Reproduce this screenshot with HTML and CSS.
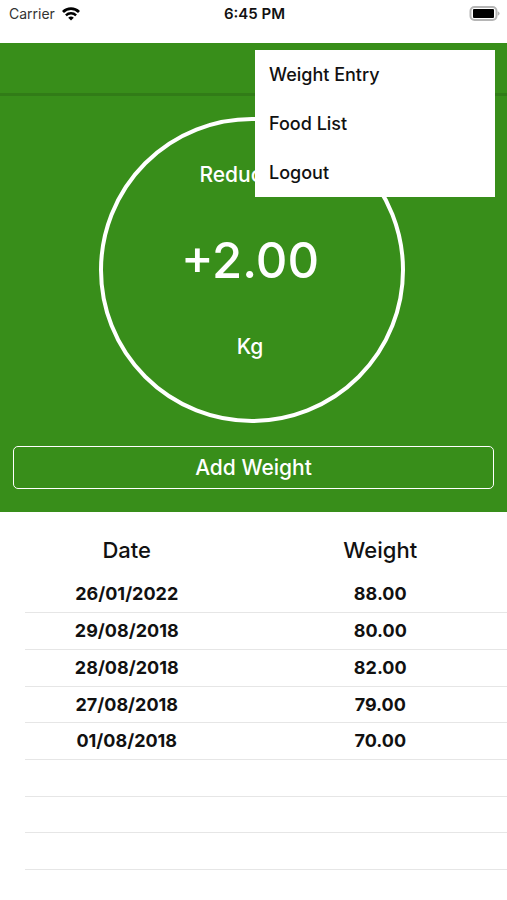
FILE: index.html
```html
<!DOCTYPE html>
<html lang="en">
<head>
    <meta charset="UTF-8">
    <meta name="viewport" content="width=device-width, initial-scale=1.0">
    <title>Weight Entry</title>
    <link rel="stylesheet" href="styles.css">
</head>
<body>
    <div class="status-bar">
        <div class="carrier">
            <span>Carrier</span>
            <svg class="wifi" viewBox="0 0 18 14" width="18" height="14" aria-hidden="true">
                <path d="M1 5a11.4 11.4 0 0 1 16 0" fill="none" stroke="#000" stroke-width="2.8"/>
                <path d="M3.9 8.3a7.2 7.2 0 0 1 10.2 0" fill="none" stroke="#000" stroke-width="2.4"/>
                <path d="M9 13.6 6.2 10.8a4 4 0 0 1 5.6 0z"/>
            </svg>
        </div>
        <div class="time">6:45 PM</div>
        <div class="battery">
            <svg viewBox="0 0 31 15" width="31" height="15" aria-hidden="true">
                <rect x="1.5" y="1" width="26" height="13" rx="4" fill="#fff" stroke="#b5b5b5" stroke-width="2"/>
                <rect x="4" y="3" width="21" height="9" rx="1"/>
                <path d="M28.8 5.2q1.8.7 1.8 2.3t-1.8 2.3z" fill="#b5b5b5"/>
            </svg>
        </div>
    </div>

    <header class="nav-bar">
        <nav class="menu">
            <a href="#weight">Weight Entry</a>
            <a href="#food">Food List</a>
            <a href="#logout">Logout</a>
        </nav>
    </header>

    <main>
        <section class="summary">
            <div class="circle">
                <span class="label">Reduction</span>
                <span class="amount">+2.00</span>
                <span class="label">Kg</span>
            </div>
            <button type="button" class="add-button">Add Weight</button>
        </section>

        <table class="entries">
            <thead>
                <tr><th>Date</th><th>Weight</th></tr>
            </thead>
            <tbody>
                <tr><td>26/01/2022</td><td>88.00</td></tr>
                <tr><td>29/08/2018</td><td>80.00</td></tr>
                <tr><td>28/08/2018</td><td>82.00</td></tr>
                <tr><td>27/08/2018</td><td>79.00</td></tr>
                <tr><td>01/08/2018</td><td>70.00</td></tr>
                <tr><td></td><td></td></tr>
                <tr><td></td><td></td></tr>
                <tr><td></td><td></td></tr>
            </tbody>
        </table>
    </main>
</body>
</html>
```

FILE: styles.css
```css
* {
    box-sizing: border-box;
}
body {
    margin: 0;
    font-family: Inter, "Liberation Sans", sans-serif;
    background-color: #fff;
    color: #111;
}

/* Status bar */
.status-bar {
    display: grid;
    grid-template-columns: 1fr auto 1fr;
    align-items: center;
    height: 43px;
    padding: 0 7px 16px 9px;
    font-size: 14px;
}
.carrier {
    display: flex;
    align-items: center;
    gap: 7px;
    color: #333;
}
.time {
    font-size: 15px;
    font-weight: 600;
}
.battery {
    display: flex;
    justify-content: flex-end;
}

/* Navigation */
.nav-bar {
    position: relative;
    height: 53px;
    background-color: #388e1a;
    border-bottom: 3px solid #317c17;
}
.menu {
    position: absolute;
    top: 7px;
    right: 12px;
    z-index: 1;
    width: 240px;
    background-color: #fff;
}
.menu a {
    display: block;
    padding: 0 14px;
    line-height: 49px;
    font-size: 18px;
    font-weight: 500;
    color: #111;
    text-decoration: none;
}

/* Weight summary */
.summary {
    display: flex;
    flex-direction: column;
    align-items: center;
    padding: 21px 13px 23px;
    background-color: #388e1a;
    color: #fff;
}
.circle {
    display: flex;
    flex-direction: column;
    align-items: center;
    justify-content: space-between;
    width: 306px;
    height: 306px;
    margin-right: 4px;
    padding: 42px 3px 60px 0;
    border: 4px solid #fff;
    border-radius: 50%;
}
.label {
    font-size: 21px;
    line-height: 24px;
    font-weight: 500;
}
.amount {
    font-size: 49px;
    line-height: 60px;
    font-weight: 500;
}
.add-button {
    width: 100%;
    height: 43px;
    margin-top: 23px;
    border: 1px solid #fff;
    border-radius: 5px;
    background: none;
    color: #fff;
    font-family: inherit;
    font-size: 21px;
    font-weight: 500;
    cursor: pointer;
}

/* Entries table */
.entries {
    width: 100%;
    table-layout: fixed;
    border-collapse: collapse;
    text-align: center;
}
.entries th {
    height: 64px;
    padding: 12px 0 0;
    font-size: 22px;
    font-weight: 500;
}
.entries td {
    height: 37px;
    padding: 0 0 2px;
    font-size: 18px;
    font-weight: 700;
}
.entries tbody tr {
    background: linear-gradient(#e6e6e6, #e6e6e6) 25px 100% / 100% 1px no-repeat;
}
.entries tr:nth-child(3n+4) td {
    height: 36px;
}
```
